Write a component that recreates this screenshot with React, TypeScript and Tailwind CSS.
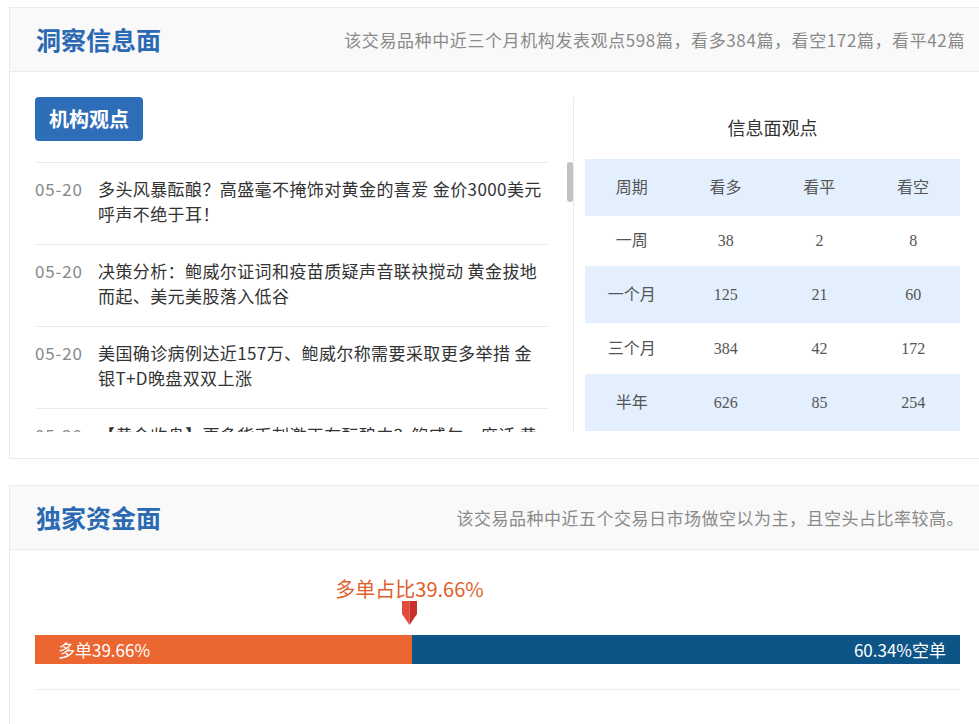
import React from "react";

const news = [
  { date: "05-20", title: "多头风暴酝酿？高盛毫不掩饰对黄金的喜爱 金价3000美元呼声不绝于耳！" },
  { date: "05-20", title: "决策分析：鲍威尔证词和疫苗质疑声音联袂搅动 黄金拔地而起、美元美股落入低谷" },
  { date: "05-20", title: "美国确诊病例达近157万、鲍威尔称需要采取更多举措 金银T+D晚盘双双上涨" },
  { date: "05-20", title: "【黄金收盘】更多货币刺激正在酝酿中？鲍威尔一席话 黄金强势上扬" },
];

const rows = [
  { p: "一周", a: "38", b: "2", c: "8", h: "h-[50px]", bg: "bg-white" },
  { p: "一个月", a: "125", b: "21", c: "60", h: "h-[57px]", bg: "bg-[#e3effd]" },
  { p: "三个月", a: "384", b: "42", c: "172", h: "h-[51px]", bg: "bg-white" },
  { p: "半年", a: "626", b: "85", c: "254", h: "h-[57px]", bg: "bg-[#e3effd]" },
];

export default function App() {
  return (
    <div
      className="h-[724px] w-[979px] overflow-hidden bg-white pt-[7px] pl-[9px]"
      style={{ fontFamily: '"Noto Sans CJK SC", "Noto Sans", sans-serif' }}
    >
      {/* Panel 1 */}
      <div className="w-[990px] border-l border-t border-b border-[#ebebeb]">
        <div className="flex h-[64px] items-center justify-between border-b border-[#ebebeb] bg-[#f9f9f9] pl-[26px] pr-[34px]">
          <div className="text-[25px] font-bold text-[#2b69b3] leading-none">洞察信息面</div>
          <div className="text-[17px] tracking-[0.6px] text-[#8a8a8a]">
            该交易品种中近三个月机构发表观点598篇，看多384篇，看空172篇，看平42篇
          </div>
        </div>
        <div className="flex pt-[25px] pb-[26px]">
          <div className="relative ml-[25px] flex h-[335px] w-[539px] flex-col border-r border-[#ebebeb]">
            <div className="flex h-[44px] w-[108px] items-center justify-center rounded-[4px] bg-[#2e6db7] text-[20px] font-bold text-white">
              机构观点
            </div>
            <div className="mt-[21px] h-[270px] w-[513px] overflow-hidden">
              {news.map((n, i) => (
                <div key={i} className="flex h-[82px] border-t border-[#ebebeb] pt-[13px]">
                  <div className="w-[63px] shrink-0 text-[17px] tracking-[0.8px] leading-[25px] text-[#888]">{n.date}</div>
                  <div className="text-[17px] tracking-[0.4px] leading-[25px] text-[#333]">{n.title}</div>
                </div>
              ))}
            </div>
            <div className="absolute left-[532px] top-[65px] h-[40px] w-[6px] rounded-[3px] bg-[#c1c1c1]" />
          </div>
          <div className="pl-[11px]">
            <div className="flex h-[62px] w-[375px] items-center justify-center pb-[2px] text-[18px] text-[#333]">
              信息面观点
            </div>
            <div
              className="w-[375px] text-[16px] text-[#555]"
              style={{ fontFamily: '"Liberation Serif", "Noto Sans CJK SC", serif' }}
            >
              <div className="grid h-[57px] grid-cols-4 items-center bg-[#e3effd] text-center">
                <div>周期</div>
                <div>看多</div>
                <div>看平</div>
                <div>看空</div>
              </div>
              {rows.map((r, i) => (
                <div key={i} className={`grid grid-cols-4 items-center text-center ${r.h} ${r.bg}`}>
                  <div>{r.p}</div>
                  <div>{r.a}</div>
                  <div>{r.b}</div>
                  <div>{r.c}</div>
                </div>
              ))}
            </div>
          </div>
        </div>
      </div>

      {/* Panel 2 */}
      <div className="mt-[26px] h-[260px] w-[990px] border-l border-t border-[#ebebeb]">
        <div className="flex h-[64px] items-center justify-between border-b border-[#ebebeb] bg-[#f9f9f9] pl-[26px] pr-[35px]">
          <div className="text-[25px] font-bold text-[#2b69b3] leading-none">独家资金面</div>
          <div className="text-[17px] tracking-[0.5px] text-[#8a8a8a]">
            该交易品种中近五个交易日市场做空以为主，且空头占比率较高。
          </div>
        </div>
        <div className="pl-[25px] pt-[26px]">
          <div className="flex w-[749px] flex-col items-center">
            <div className="text-[20px] leading-[25px] text-[#e0602c]">多单占比39.66%</div>
            <svg width="15" height="24" viewBox="0 0 15 24">
              <polygon points="0,0 7.5,0 7.5,24 0,13" fill="#e44a3c" />
              <polygon points="7.5,0 15,0 15,13 7.5,24" fill="#c5302a" />
            </svg>
          </div>
          <div className="mt-[10px] flex h-[29px] w-[925px] text-[17px] leading-[29px] text-white">
            <div className="w-[377px] bg-[#eb6631] pl-[23px]">多单39.66%</div>
            <div className="flex-1 bg-[#0d5487] pr-[14px] text-right">60.34%空单</div>
          </div>
          <div className="mt-[25px] w-[925px] border-t border-[#ededed]" />
        </div>
      </div>
    </div>
  );
}
